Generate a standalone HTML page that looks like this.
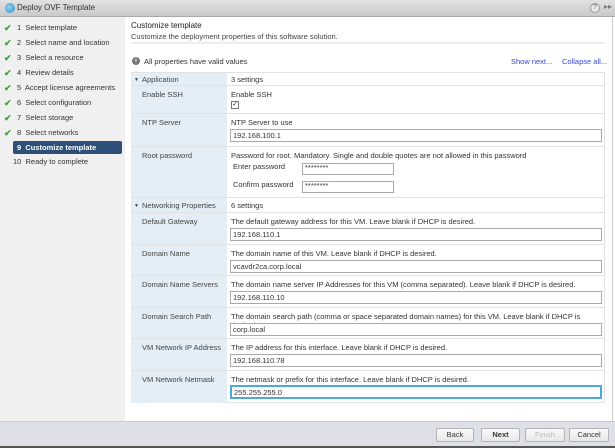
<!DOCTYPE html>
<html><head><style>
*{margin:0;padding:0;box-sizing:border-box}
body{width:615px;height:448px;overflow:hidden;font-family:"Liberation Sans",Arial,sans-serif;font-size:7.5px;color:#333;background:#fff;position:relative}
.a{position:absolute;white-space:nowrap}
.title{left:0;top:0;width:615px;height:17px;background:linear-gradient(#e2e2e2,#c9c9c9);border-bottom:1px solid #aaa}
.nav{left:0;top:17px;width:125px;height:404px;background:#f0f0f0}
.ni{position:absolute;left:0;width:125px;height:14px;line-height:14px;font-size:7.5px;color:#333}
.ni .ck{position:absolute;left:4px;color:#3aa43a;font-weight:bold;font-size:9px}
.ni .t{position:absolute;left:17px}
.sel{left:13px;top:141px;width:109px;height:13px;background:#2d4f78;border-radius:2px}
.lc{background:#e4eef6}
.row{position:absolute;left:131px;width:474px;border-bottom:1px solid #e2e2e2}
.row .l{position:absolute;left:0;top:0;bottom:0;width:96px;background:#e4eef6;padding:4px 0 0 11px;color:#444}
.row .d{position:absolute;left:100px;top:4px;color:#333}
.in{position:absolute;left:99px;width:372px;height:13px;border:1px solid #aaa;background:#fff;font-size:7.5px;line-height:11px;padding-left:2px;color:#333}
.btn{position:absolute;top:428px;height:14px;border:1px solid #b4b4b4;border-radius:2px;background:linear-gradient(#fafafa,#e8e8e8);font-size:7.5px;line-height:12px;text-align:center;color:#333}
</style></head><body>
<div class="a title"></div>
<div class="a" style="left:5px;top:3px;width:10px;height:10px;border-radius:50%;background:radial-gradient(circle at 40% 40%,#8fd0f0,#2a8fc8)"></div>
<div class="a" style="left:17px;top:3px;font-size:8px;color:#333">Deploy OVF Template</div>
<div class="a" style="left:590px;top:3px;width:10px;height:10px;border-radius:50%;background:#e8e8e8;border:1px solid #999;font-size:7px;line-height:8px;text-align:center;color:#666">?</div>
<div class="a" style="left:604px;top:2px;font-size:8px;color:#777">▸▸</div>

<div class="a nav"></div>
<div class="a sel"></div>
<div class="ni" style="top:21px"><span class="ck">✔</span><span class="t">1&nbsp; Select template</span></div>
<div class="ni" style="top:36px"><span class="ck">✔</span><span class="t">2&nbsp; Select name and location</span></div>
<div class="ni" style="top:51px"><span class="ck">✔</span><span class="t">3&nbsp; Select a resource</span></div>
<div class="ni" style="top:66px"><span class="ck">✔</span><span class="t">4&nbsp; Review details</span></div>
<div class="ni" style="top:81px"><span class="ck">✔</span><span class="t">5&nbsp; Accept license agreements</span></div>
<div class="ni" style="top:96px"><span class="ck">✔</span><span class="t">6&nbsp; Select configuration</span></div>
<div class="ni" style="top:111px"><span class="ck">✔</span><span class="t">7&nbsp; Select storage</span></div>
<div class="ni" style="top:126px"><span class="ck">✔</span><span class="t">8&nbsp; Select networks</span></div>
<div class="ni" style="top:141px;color:#fff;font-weight:bold"><span class="t">9&nbsp; Customize template</span></div>
<div class="ni" style="top:155px"><span class="t" style="left:13px">10&nbsp; Ready to complete</span></div>

<div class="a" style="left:131px;top:21px;font-size:8px;color:#222">Customize template</div>
<div class="a" style="left:131px;top:32px;color:#444">Customize the deployment properties of this software solution.</div>
<div class="a" style="left:131px;top:42px;width:474px;height:2px;background:#eee"></div>

<div class="a" style="left:132px;top:57px;width:8px;height:8px;border-radius:50%;background:#777;color:#fff;font-size:6px;line-height:8px;text-align:center;font-weight:bold">i</div>
<div class="a" style="left:144px;top:57px;color:#333">All properties have valid values</div>
<div class="a" style="left:511px;top:57px;color:#3344dd">Show next...</div>
<div class="a" style="left:562px;top:57px;color:#3344dd">Collapse all...</div>

<div class="a" style="left:131px;top:72px;width:474px;height:331px;border:1px solid #e2e2e2"></div>
<div class="row" style="top:73px;height:13px"><div class="l" style="padding:2px 0 0 11px"><span style="position:absolute;left:3px;font-size:5px;top:4px">▼</span>Application</div><div class="d" style="top:2px">3 settings</div></div>
<div class="row" style="top:86px;height:28px"><div class="l">Enable SSH</div><div class="d">Enable SSH</div><div class="a" style="left:100px;top:15px;width:8px;height:8px;border:1px solid #777;background:#fff;font-size:7px;line-height:6px;text-align:center">✓</div></div>
<div class="row" style="top:114px;height:33px"><div class="l">NTP Server</div><div class="d">NTP Server to use</div><div class="in" style="top:15px">192.168.100.1</div></div>
<div class="row" style="top:147px;height:51px"><div class="l">Root password</div><div class="d">Password for root. Mandatory. Single and double quotes are not allowed in this password</div>
<div class="d" style="left:102px;top:15px">Enter password</div><div class="in" style="left:171px;top:16px;width:92px;height:12px;line-height:8px">********</div>
<div class="d" style="left:102px;top:33px">Confirm password</div><div class="in" style="left:171px;top:34px;width:92px;height:12px;line-height:8px">********</div></div>
<div class="row" style="top:198px;height:15px"><div class="l" style="padding:3px 0 0 11px"><span style="position:absolute;left:3px;font-size:5px;top:5px">▼</span>Networking Properties</div><div class="d" style="top:3px">6 settings</div></div>
<div class="row" style="top:213px;height:32px"><div class="l">Default Gateway</div><div class="d">The default gateway address for this VM. Leave blank if DHCP is desired.</div><div class="in" style="top:15px">192.168.110.1</div></div>
<div class="row" style="top:245px;height:31px"><div class="l">Domain Name</div><div class="d">The domain name of this VM. Leave blank if DHCP is desired.</div><div class="in" style="top:15px">vcavdr2ca.corp.local</div></div>
<div class="row" style="top:276px;height:32px"><div class="l">Domain Name Servers</div><div class="d">The domain name server IP Addresses for this VM (comma separated). Leave blank if DHCP is desired.</div><div class="in" style="top:15px">192.168.110.10</div></div>
<div class="row" style="top:308px;height:31px"><div class="l">Domain Search Path</div><div class="d">The domain search path (comma or space separated domain names) for this VM. Leave blank if DHCP is desired.</div><div class="in" style="top:15px">corp.local</div></div>
<div class="row" style="top:339px;height:32px"><div class="l">VM Network IP Address</div><div class="d">The IP address for this interface. Leave blank if DHCP is desired.</div><div class="in" style="top:15px">192.168.110.78</div></div>
<div class="row" style="top:371px;height:32px;border-bottom:none"><div class="l">VM Network Netmask</div><div class="d">The netmask or prefix for this interface. Leave blank if DHCP is desired.</div><div class="in" style="top:14px;border:2px solid #4fa8dc;height:14px">255.255.255.0</div></div>

<div class="a" style="left:612px;top:17px;width:1px;height:404px;background:#ccc"></div>
<div class="a" style="left:0;top:421px;width:615px;height:25px;background:#dde1e7;border-top:1px solid #c8ccd2"></div>
<div class="a" style="left:0;top:446px;width:615px;height:2px;background:#555"></div>
<div class="btn" style="left:436px;width:38px">Back</div>
<div class="btn" style="left:481px;width:39px;font-weight:bold">Next</div>
<div class="btn" style="left:525px;width:40px;color:#bbb">Finish</div>
<div class="btn" style="left:569px;width:40px">Cancel</div>
</body></html>
